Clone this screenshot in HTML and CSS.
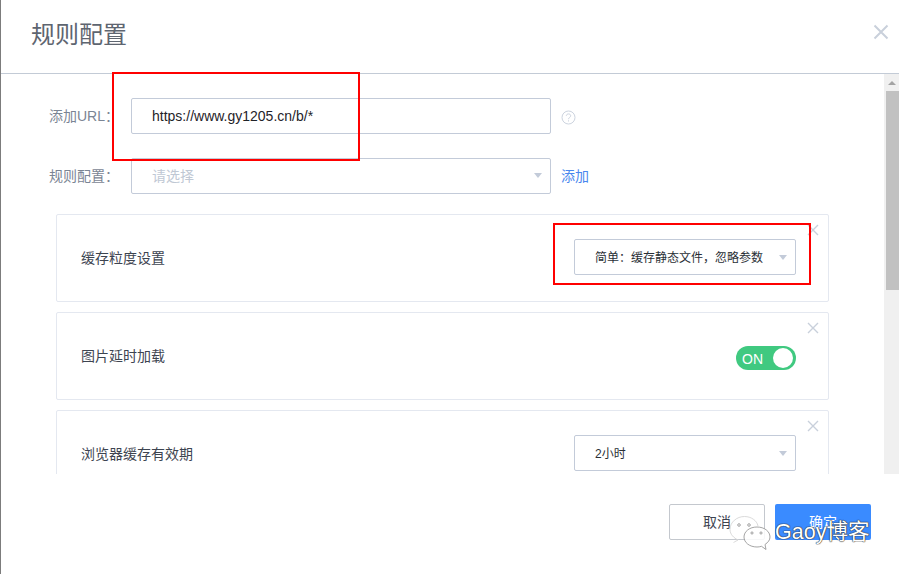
FILE: index.html
```html
<!DOCTYPE html>
<html lang="zh-CN">
<head>
<meta charset="utf-8">
<title>规则配置</title>
<link rel="stylesheet" href="styles.css">
</head>
<body>
<div class="modal">
  <header class="modal-head">
    <h1 class="modal-title">规则配置</h1>
    <svg class="modal-close" width="16" height="16" viewBox="0 0 16 16"><path d="M1.500 1.500L14.500 14.500M14.500 1.500L1.500 14.500"/></svg>
  </header>
  <div class="modal-body">
    <div class="content">
      <div class="form-row">
        <span class="form-label">添加URL：</span>
        <div class="control"><span class="value-url">https://www.gy1205.cn/b/*</span></div>
        <svg class="help" width="15" height="15" viewBox="0 0 15 15"><circle cx="7.500" cy="7.500" r="6.500"/><path d="M5.300 5.800C5.400 3.300 9.700 3.300 9.700 5.800C9.700 7.400 7.500 7.400 7.500 9.200"/><path d="M7.500 10.300V11.500"/></svg>
      </div>
      <div class="form-row form-row-last">
        <span class="form-label">规则配置：</span>
        <div class="control"><span class="placeholder">请选择</span><i class="caret"></i></div>
        <a class="add-link">添加</a>
      </div>
      <section class="card">
        <span class="card-label">缓存粒度设置</span>
        <div class="select"><span class="select-text">简单：缓存静态文件，忽略参数</span><i class="caret caret-small"></i></div>
        <svg class="card-close" width="12" height="12" viewBox="0 0 12 12"><path d="M1 1L11 11M11 1L1 11"/></svg>
      </section>
      <section class="card">
        <span class="card-label">图片延时加载</span>
        <div class="switch"><span class="switch-text">ON</span><i class="switch-knob"></i></div>
        <svg class="card-close" width="12" height="12" viewBox="0 0 12 12"><path d="M1 1L11 11M11 1L1 11"/></svg>
      </section>
      <section class="card">
        <span class="card-label">浏览器缓存有效期</span>
        <div class="select"><span class="select-text select-text-short">2小时</span><i class="caret caret-small"></i></div>
        <svg class="card-close" width="12" height="12" viewBox="0 0 12 12"><path d="M1 1L11 11M11 1L1 11"/></svg>
      </section>
    </div>
    <div class="scrollbar">
      <div class="scroll-up"><i class="scroll-arrow"></i></div>
      <div class="scroll-thumb"></div>
    </div>
  </div>
  <footer class="modal-foot">
    <button class="btn btn-cancel">取消</button>
    <button class="btn btn-ok">确定</button>
  </footer>
</div>
<div class="mark mark-url"></div>
<div class="mark mark-select"></div>
<div class="watermark">
  <svg class="wechat" width="42" height="36" viewBox="0 0 42 36">
    <path class="bubble-back" d="M4.500 27.500L9 25C5 23 1 19.500 1 14.500C1 7 8 1.500 15.500 1.500C22 1.500 28 5.500 29 11"/>
    <path class="bubble-front" d="M28 12C20.500 12 15 16.500 15 22C15 27.500 20.500 32 28 32C29.500 32 31 31.800 32.500 31.300L37 34.500L36 29.500C39 27.500 41 25 41 22C41 16.500 35.500 12 28 12Z"/>
    <circle cx="10" cy="10" r="1.300"/><circle cx="20" cy="10" r="1.300"/>
    <circle cx="23" cy="18" r="1.100"/><circle cx="32" cy="18" r="1.100"/>
  </svg>
  <span class="wm-text">Gaoy博客</span>
</div>
</body>
</html>
```
FILE: styles.css
```css
* { box-sizing: border-box; }
html, body { margin: 0; padding: 0; }
body {
  width: 899px;
  height: 574px;
  overflow: hidden;
  position: relative;
  background: #fff;
  font-family: "Liberation Sans", "Noto Sans CJK SC", sans-serif;
}
.modal {
  width: 899px;
  height: 574px;
  display: flex;
  flex-direction: column;
  border-left: 1px solid #7c7c7c;
  background: #fff;
}
.modal-head {
  height: 74px;
  flex: none;
  border-bottom: 1px solid #c3cbd6;
  display: flex;
  align-items: flex-start;
  justify-content: space-between;
  padding: 20px 10px 0 30px;
}
.modal-title {
  margin: 0;
  font-size: 24px;
  line-height: 30px;
  font-weight: 400;
  color: #5e6570;
}
.modal-close { margin-top: 4px; fill: none; stroke: #c9d0db; stroke-width: 2; }
.modal-body {
  height: 400px;
  flex: none;
  display: flex;
  overflow: hidden;
}
.content {
  width: 883px;
  flex: none;
  padding: 24px 0 0 55px;
  height: 400px;
  overflow: hidden;
}
.form-row {
  height: 36px;
  display: flex;
  align-items: center;
  margin-bottom: 24px;
  font-size: 14px;
}
.form-row-last { margin-bottom: 20px; }
.form-label { width: 75px; flex: none; color: #7b8594; line-height: 36px; margin-left: -7px; margin-right: 7px; }
.control {
  width: 420px;
  height: 36px;
  flex: none;
  border: 1px solid #c3cbd9;
  border-radius: 2px;
  padding-left: 20px;
  display: flex;
  align-items: center;
  justify-content: space-between;
  position: relative;
}
.value-url { color: #1f2329; font-size: 14px; }
.placeholder { color: #c0c8d4; font-size: 14px; margin-bottom: 2px; }
.caret {
  width: 0;
  height: 0;
  border-left: 4px solid transparent;
  border-right: 4px solid transparent;
  border-top: 5px solid #c3cbd9;
  margin-right: 8px;
  margin-top: -2px;
}
.help { margin-left: 10px; margin-top: 2px; fill: none; stroke: #cdd4df; stroke-width: 1; }
.add-link { margin-left: 10px; margin-bottom: 2px; color: #4a87ee; font-size: 14px; }
.card {
  width: 773px;
  height: 88px;
  margin: 0 0 10px 0;
  padding: 0 32px 0 24px;
  border: 1px solid #e4e8f0;
  border-radius: 2px;
  display: flex;
  align-items: center;
  justify-content: space-between;
  position: relative;
}
.card-label { font-size: 14px; color: #3d4450; margin-bottom: 2px; }
.select {
  width: 222px;
  height: 36px;
  flex: none;
  margin-bottom: 2px;
  border: 1px solid #c3cbd9;
  border-radius: 2px;
  padding-left: 20px;
  display: flex;
  align-items: center;
  justify-content: space-between;
}
.select-text { font-size: 12px; color: #2a2f36; letter-spacing: 0; margin-bottom: 2px; }
.caret-small { margin-right: 8px; margin-top: 0; }
.card-close {
  position: absolute;
  top: 9px;
  right: 9px;
  fill: none;
  stroke: #c9d0db;
  stroke-width: 1.400;
}
.switch {
  width: 60px;
  height: 24px;
  margin-top: 4px;
  border-radius: 12px;
  background: #40c980;
  display: flex;
  align-items: center;
  justify-content: space-between;
  padding: 0 3px 0 6px;
}
.switch-text { color: #fff; font-size: 14px; margin-top: 2px; }
.switch-knob { width: 20px; height: 20px; border-radius: 50%; background: #fff; }
.scrollbar {
  width: 15px;
  flex: none;
  background: #f0f0f0;
  display: flex;
  flex-direction: column;
  align-items: flex-end;
}
.scroll-up {
  width: 15px;
  height: 17px;
  background: #f0f0f0;
  display: flex;
  align-items: center;
  justify-content: center;
}
.scroll-arrow {
  width: 0;
  height: 0;
  border-left: 4px solid transparent;
  border-right: 4px solid transparent;
  border-bottom: 4px solid #a3a3a3;
}
.scroll-thumb { width: 13px; height: 199px; background: #c1c1c1; }
.modal-foot {
  flex: 1;
  display: flex;
  justify-content: flex-end;
  gap: 10px;
  padding: 30px 28px 0 0;
}
.btn {
  width: 96px;
  height: 36px;
  border-radius: 2px;
  font: 14px "Liberation Sans", "Noto Sans CJK SC", sans-serif;
  padding: 0 0 2px;
}
.btn-cancel { background: #fff; border: 1px solid #c4c8ce; color: #3d4450; }
.btn-ok { background: #3a8bff; border: 0; color: #fff; }
.mark { position: absolute; border: 2px solid #ff0000; pointer-events: none; }
.mark-url { left: 112px; top: 72px; width: 248px; height: 89px; }
.mark-select { left: 553px; top: 223px; width: 258px; height: 62px; }
.watermark { position: absolute; left: 729px; top: 515px; display: flex; align-items: center; }
.wechat { fill: #fff; stroke: #8d8d8d; stroke-width: 0.800; margin-right: 5px; }
.bubble-back { fill: rgba(255, 255, 255, 0.550); stroke: #d0d0d0; }
.bubble-front { fill: rgba(255, 255, 255, 0.850); }
.wm-text {
  color: #fff;
  font-size: 21.500px;
  line-height: 24px;
  margin: -2px 0 0 -1px;
  text-shadow: 0 0 1px #333, 0 0 1px #333, 0 0 1px #333;
}
```
